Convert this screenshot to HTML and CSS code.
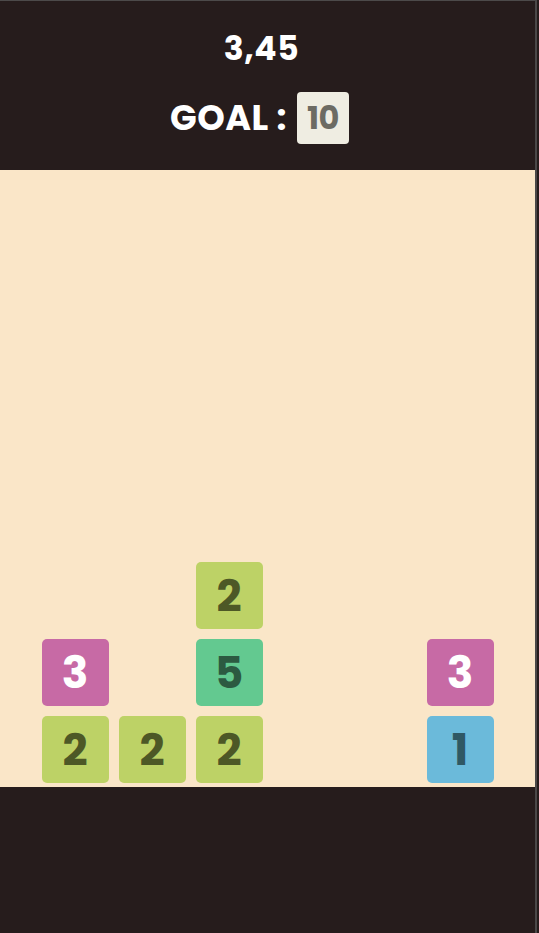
FILE: index.html
```html
<!DOCTYPE html>
<html>
<head>
<meta charset="utf-8">
<link rel="stylesheet" href="styles.css">
</head>
<body>
<div class="app">
  <header class="header">
    <div class="score">3,45</div>
    <div class="goal">
      <span class="goal-label">GOAL :</span>
      <span class="goal-box">10</span>
    </div>
  </header>
  <main class="board">
    <div class="col">
      <div class="tile lime">2</div>
      <div class="tile pink">3</div>
    </div>
    <div class="col">
      <div class="tile lime">2</div>
    </div>
    <div class="col">
      <div class="tile lime">2</div>
      <div class="tile green">5</div>
      <div class="tile lime">2</div>
    </div>
    <div class="col"></div>
    <div class="col"></div>
    <div class="col">
      <div class="tile blue">1</div>
      <div class="tile pink">3</div>
    </div>
  </main>
  <footer class="footer"></footer>
</div>
</body>
</html>
```

FILE: styles.css
```css
html, body {
  margin: 0;
  padding: 0;
  background: #261c1c;
}
body {
  font-family: "Poppins", "Inter", "DejaVu Sans", sans-serif;
}
.app {
  width: 537px;
  height: 933px;
  border-right: 2px solid #4a4848;
  display: flex;
  flex-direction: column;
  background: #261c1c;
  border-top: 1px solid #4c4a4a;
  box-sizing: border-box;
}
.header {
  height: 169px;
  display: flex;
  flex-direction: column;
  align-items: center;
  padding-right: 16px;
  box-sizing: border-box;
}
.score {
  color: #ffffff;
  font-weight: 700;
  font-size: 33px;
  line-height: 40px;
  margin-top: 28px;
  margin-left: 4px;
  letter-spacing: 0.6px;
}
.goal {
  display: flex;
  align-items: center;
  margin-top: 23px;
  gap: 10px;
}
.goal-label {
  color: #ffffff;
  font-weight: 700;
  font-size: 35px;
  line-height: 40px;
  letter-spacing: 0.5px;
}
.goal-box {
  width: 52px;
  height: 52px;
  border-radius: 4px;
  background: #efede2;
  color: #6c6b63;
  font-weight: 700;
  font-size: 32px;
  display: flex;
  align-items: center;
  justify-content: center;
  letter-spacing: -0.5px;
}
.board {
  height: 617px;
  background: #fae6c8;
  display: flex;
  justify-content: center;
  gap: 10px;
  padding-bottom: 4px;
  box-sizing: border-box;
}
.col {
  width: 67px;
  display: flex;
  flex-direction: column-reverse;
  gap: 10px;
}
.tile {
  width: 67px;
  height: 67px;
  border-radius: 5px;
  display: flex;
  align-items: center;
  justify-content: center;
  font-weight: 700;
  font-size: 44px;
}
.lime { background: #bdd266; color: #4d5826; }
.pink { background: #c76aa5; color: #ffffff; }
.green { background: #63c990; color: #2c5a41; }
.blue { background: #6bbada; color: #2f5864; }
.footer {
  flex: 1;
  background: #261c1c;
}
```
